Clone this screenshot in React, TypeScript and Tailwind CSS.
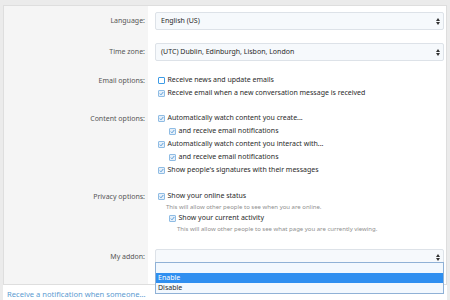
import React from "react";

const font = { fontFamily: '"Noto Sans", "Open Sans", sans-serif' };

function Arrows() {
  return (
    <svg width="4" height="7" viewBox="0 0 4 7" className="shrink-0">
      <path d="M2 0 L4 3 L0 3 Z" fill="#333" />
      <path d="M0 4 L4 4 L2 7 Z" fill="#333" />
    </svg>
  );
}

function Select({ text }: { text?: string }) {
  return (
    <div className="h-[18px] flex items-center justify-between pl-[5px] pr-[3px] bg-[#f6f9fc] border border-[#dde2e8] rounded-[2px] text-[7px] text-[#2a2a2a]">
      <span>{text}</span>
      <Arrows />
    </div>
  );
}

function Box({ checked }: { checked: boolean }) {
  return checked ? (
    <span className="w-[7px] h-[7px] shrink-0 border border-[#8fbce4] bg-[#e6f0fa] flex items-center justify-center rounded-[1px]">
      <svg width="5" height="5" viewBox="0 0 5 5">
        <path d="M0.8 2.6 L2 3.8 L4.3 1" fill="none" stroke="#4f95d3" strokeWidth="0.9" />
      </svg>
    </span>
  ) : (
    <span className="w-[7px] h-[7px] shrink-0 border border-[#3d9be6] bg-white rounded-[1px]" />
  );
}

function Check({ label, checked = true, indent = false }: { label: string; checked?: boolean; indent?: boolean }) {
  return (
    <div className={`flex items-center h-[13px] ${indent ? "pl-[11px]" : ""}`}>
      <Box checked={checked} />
      <span className="pl-[2.5px] text-[7px] text-[#2a2a2a] whitespace-nowrap">{label}</span>
    </div>
  );
}

function Hint({ text, indent = false }: { text: string; indent?: boolean }) {
  return (
    <div className={`h-[9px] leading-[9px] text-[6px] text-[#8f8f8f] whitespace-nowrap ${indent ? "pl-[19px]" : "pl-[8px]"}`}>{text}</div>
  );
}

function Row({ label, children, pt, pb, lh = 13 }: { label: string; children: React.ReactNode; pt: string; pb: string; lh?: number }) {
  return (
    <div className="flex">
      <div className={`w-[144px] shrink-0 bg-[#f5f5f5] text-right pr-[3px] text-[7px] text-[#555555] ${pt} ${pb}`}>
        <div style={{ lineHeight: `${lh}px` }}>{label}</div>
      </div>
      <div className={`flex-1 ${pt} ${pb} ${lh === 13 ? "pl-[10px]" : "pl-[7px]"} pr-[2px]`}>{children}</div>
    </div>
  );
}

export default function App() {
  return (
    <div className="w-[450px] h-[300px] bg-[#ebebeb] overflow-hidden relative" style={font}>
      <div className="mt-[5px] mx-[3px] border border-[#dedede] bg-white">
        <Row label="Language:" pt="pt-[6px]" pb="pb-[6px]" lh={18}>
          <Select text="English (US)" />
        </Row>
        <Row label="Time zone:" pt="pt-[7px]" pb="pb-[7px]" lh={18}>
          <Select text="(UTC) Dublin, Edinburgh, Lisbon, London" />
        </Row>
        <Row label="Email options:" pt="pt-[5.5px]" pb="pb-[6px]">
          <Check label="Receive news and update emails" checked={false} />
          <Check label="Receive email when a new conversation message is received" />
        </Row>
        <Row label="Content options:" pt="pt-[6.5px]" pb="pb-[6.5px]">
          <Check label="Automatically watch content you create..." />
          <Check label="and receive email notifications" indent />
          <Check label="Automatically watch content you interact with..." />
          <Check label="and receive email notifications" indent />
          <Check label="Show people's signatures with their messages" />
        </Row>
        <Row label="Privacy options:" pt="pt-[6.5px]" pb="pb-[8px]">
          <Check label="Show your online status" />
          <Hint text="This will allow other people to see when you are online." />
          <Check label="Show your current activity" indent />
          <Hint text="This will allow other people to see what page you are currently viewing." indent />
        </Row>
        <Row label="My addon:" pt="pt-[7px]" pb="pb-[19px]" lh={16}>
          <div className="h-[16px] flex items-center justify-end pr-[3px] bg-[#f6f9fc] border border-[#dde2e8] rounded-[2px]">
            <Arrows />
          </div>
        </Row>
      </div>
      <div className="mx-[3px] h-[19px] bg-white flex items-center pl-[4px] text-[7.6px] text-[#5b9bd1]">
        Receive a notification when someone...
      </div>
      <div className="absolute left-[155px] top-[262px] w-[289px] border border-[#8fb1d6] bg-[#f2f8fe] text-[7px]">
        <div className="h-[10px]" />
        <div className="h-[10px] leading-[10px] bg-[#2f8ff0] text-white pl-[2px]">Enable</div>
        <div className="h-[10px] leading-[10px] text-[#2a2a2a] pl-[2px]">Disable</div>
      </div>
    </div>
  );
}
